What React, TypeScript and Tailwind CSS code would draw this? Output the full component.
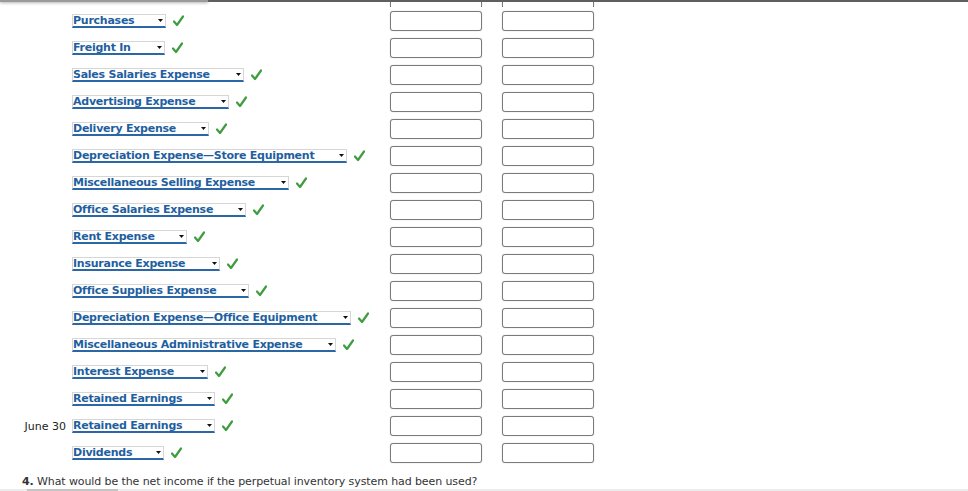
import React from 'react';

type Row = { label: string; width: number; date?: string };

const rows: Row[] = [
  { label: 'Purchases', width: 94 },
  { label: 'Freight In', width: 93 },
  { label: 'Sales Salaries Expense', width: 172 },
  { label: 'Advertising Expense', width: 157 },
  { label: 'Delivery Expense', width: 137 },
  { label: 'Depreciation Expense\u2014Store Equipment', width: 275 },
  { label: 'Miscellaneous Selling Expense', width: 217 },
  { label: 'Office Salaries Expense', width: 174 },
  { label: 'Rent Expense', width: 115 },
  { label: 'Insurance Expense', width: 148 },
  { label: 'Office Supplies Expense', width: 177 },
  { label: 'Depreciation Expense\u2014Office Equipment', width: 279 },
  { label: 'Miscellaneous Administrative Expense', width: 264 },
  { label: 'Interest Expense', width: 136 },
  { label: 'Retained Earnings', width: 143 },
  { label: 'Retained Earnings', width: 143, date: 'June 30' },
  { label: 'Dividends', width: 92 },
];

function Check() {
  return (
    <svg width="11" height="12" viewBox="0 0 11 12" className="ml-[7px] shrink-0">
      <path d="M1 6.5 L4 10 L10 1.5" fill="none" stroke="#3f9c3f" strokeWidth="2.2" strokeLinecap="round" strokeLinejoin="round" />
    </svg>
  );
}

function Dropdown({ label, width }: { label: string; width: number }) {
  return (
    <div
      style={{ width }}
      className="flex h-[14px] items-center justify-between border border-[#d6d6d6] border-b-2 border-b-[#2b67a6] bg-white pr-[2px]"
    >
      <span className="text-[11px] font-bold leading-[11px] tracking-[-0.25px] text-[#1f5f9f] whitespace-nowrap">{label}</span>
      <svg width="5" height="3" viewBox="0 0 5 3" className="shrink-0">
        <path d="M0 0 H5 L2.5 3 Z" fill="#111" />
      </svg>
    </div>
  );
}

function Box() {
  return <div className="h-[20px] w-[92px] rounded-[3px] border border-[#7a7a7a] bg-white shadow-[0_0_1px_rgba(0,0,0,0.35)]" />;
}

export default function App() {
  return (
    <div className="relative h-[491px] w-[968px] overflow-hidden bg-white" style={{ fontFamily: '"DejaVu Sans", Verdana, sans-serif' }}>
      {/* top edge */}
      <div className="absolute left-0 right-0 top-0 flex h-[2px]">
        <div className="h-[2px] w-[208px] bg-[#9a9a9a] shadow-[0_1px_3px_rgba(0,0,0,0.35)]" />
        <div className="h-[2px] flex-1 bg-[#5f5f5f]" />
      </div>

      {/* bottom of the previous row, scrolled off */}
      <div className="flex h-[7px] items-end overflow-hidden pl-[390px]">
        <div className="-mb-[3px] flex gap-[20px]">
          <Box />
          <Box />
        </div>
      </div>

      {rows.map((r, i) => (
        <div key={i} className="flex h-[27px] items-center">
          <div className="w-[72px] pr-[6px] pt-[3px] text-right text-[11px] text-[#222] whitespace-nowrap">{r.date ?? ''}</div>
          <div className="flex w-[318px] items-center">
            <Dropdown label={r.label} width={r.width} />
            <Check />
          </div>
          <div className="flex gap-[20px]">
            <Box />
            <Box />
          </div>
        </div>
      ))}

      <div className="mt-[8px] h-[16px] pl-[22px] text-[11px] leading-[16px] tracking-[-0.1px] text-[#333]">
        <span className="font-bold">4.</span> What would be the net income if the perpetual inventory system had been used?
      </div>

      <div className="absolute bottom-0 left-0 right-0 h-[2px] bg-[#ececec]">
        <div className="ml-[27px] h-[2px] w-[91px] bg-[#c4c4c4]" />
      </div>
    </div>
  );
}
